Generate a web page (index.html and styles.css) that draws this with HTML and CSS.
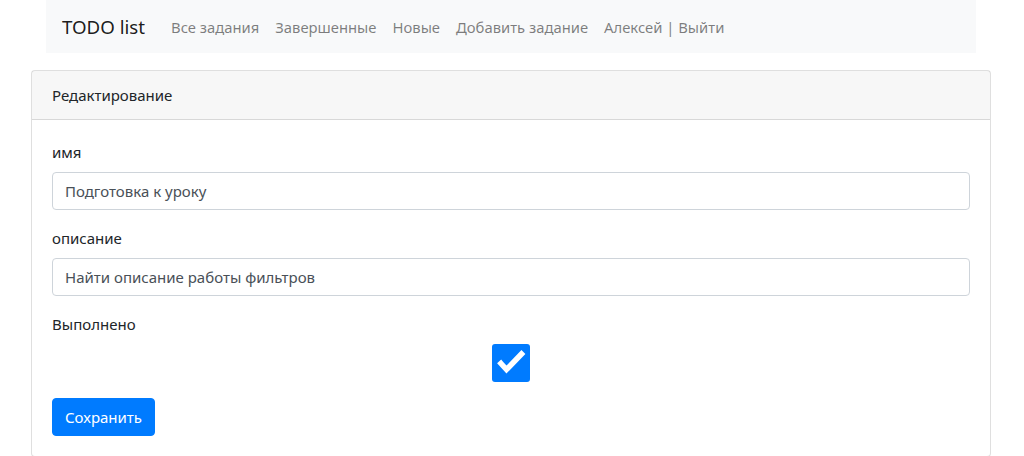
FILE: index.html
```html
<!DOCTYPE html>
<html lang="ru">
<head>
<meta charset="utf-8">
<title>TODO list</title>
<link rel="stylesheet" href="styles.css">
</head>
<body>
<div class="container">
  <nav class="navbar">
    <a class="brand" href="#">TODO list</a>
    <ul class="nav">
      <li><a href="#">Все задания</a></li>
      <li><a href="#">Завершенные</a></li>
      <li><a href="#">Новые</a></li>
      <li><a href="#">Добавить задание</a></li>
      <li><a href="#">Алексей | Выйти</a></li>
    </ul>
  </nav>
  <div class="row">
    <div class="card">
      <div class="card-header">Редактирование</div>
      <div class="card-body">
        <div class="form-group">
          <label>имя</label>
          <input class="form-control" type="text" value="Подготовка к уроку">
        </div>
        <div class="form-group">
          <label>описание</label>
          <input class="form-control" type="text" value="Найти описание работы фильтров">
        </div>
        <div class="form-group">
          <label>Выполнено</label>
          <div class="check-wrap">
            <span class="check">
              <svg viewBox="0 0 38 38" width="38" height="38"><rect x="0" y="0" width="38" height="38" rx="3" fill="#007bff"/><path d="M9 19.5 L14.5 25.5 L29.5 10" fill="none" stroke="#fff" stroke-width="5.5" stroke-linecap="square" stroke-linejoin="miter"/></svg>
            </span>
          </div>
        </div>
        <button class="btn" type="button">Сохранить</button>
      </div>
    </div>
  </div>
</div>
</body>
</html>
```
FILE: styles.css
```css
* { box-sizing: border-box; }
body {
  margin: 0;
  font-family: "Segoe UI", "Noto Sans", "Open Sans", sans-serif;
  font-size: 15px;
  line-height: 24px;
  color: #212529;
  background: #fff;
}
.container {
  width: 960px;
  margin: 0 0 0 31px;
  padding: 0 15px;
}
.navbar {
  display: flex;
  align-items: center;
  background: #f8f9fa;
  height: 53px;
  padding: 8px 16px;
}
.brand {
  font-size: 18.7px;
  line-height: 30px;
  color: rgba(0,0,0,.9);
  text-decoration: none;
  margin-right: 18px;
}
.nav {
  display: flex;
  list-style: none;
  margin: 0;
  padding: 0;
}
.nav a {
  display: block;
  padding: 8px 8px;
  color: rgba(0,0,0,.5);
  text-decoration: none;
  font-size: 14.8px;
}
.row {
  margin: 17px -15px 0;
}
.card {
  border: 1px solid rgba(0,0,0,.125);
  border-radius: 4px;
  background: #fff;
}
.card-header {
  background: rgba(0,0,0,.03);
  border-bottom: 1px solid rgba(0,0,0,.125);
  padding: 12px 20px;
}
.card-body {
  padding: 20px;
}
.form-group {
  margin-bottom: 16px;
}
label {
  display: block;
  margin-bottom: 8px;
}
.form-control {
  display: block;
  width: 100%;
  height: 38px;
  padding: 6px 12px;
  font-family: inherit;
  font-size: 15px;
  color: #495057;
  border: 1px solid #ced4da;
  border-radius: 4px;
  background: #fff;
}
.check-wrap {
  display: flex;
  justify-content: center;
  height: 38px;
}
.check { display: block; width: 38px; height: 38px; }
.check svg { display: block; }
.btn {
  display: block;
  font-family: inherit;
  font-size: 15px;
  line-height: 24px;
  color: #fff;
  background: #007bff;
  border: 1px solid #007bff;
  border-radius: 4px;
  padding: 6px 12px;
}
```
